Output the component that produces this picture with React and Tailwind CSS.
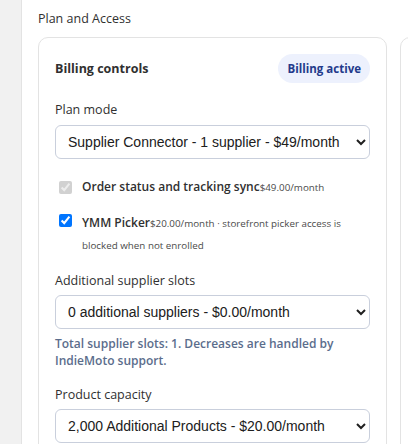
import React from 'react';

const ui = { fontFamily: '"Open Sans", "Noto Sans", sans-serif' };
const field = { fontFamily: '"Liberation Sans", Arial, sans-serif' };

function Select({ value, options }) {
  return (
    <select
      defaultValue={value}
      style={field}
      className="w-full h-[34px] rounded-[6px] border border-[#c9cfdc] bg-white pl-[8px] pr-[6px] text-[14px] text-[#202020]"
    >
      {options.map(o => <option key={o}>{o}</option>)}
    </select>
  );
}

export default function App() {
  return (
    <div style={ui} className="w-[408px] h-[444px] overflow-hidden flex bg-[#f1f1f1] text-[#303030]">
      <div className="w-[21px] shrink-0" />
      <div className="flex-1 bg-white border-l border-[#e3e3e3] pl-[16px] pt-[9px] overflow-hidden">
        <h2 className="text-[12.5px] leading-[20px] mb-[8px]">Plan and Access</h2>
        <div className="grid grid-cols-[349px_349px] gap-[13px]">
          <div className="rounded-[10px] border border-[#e3e3e3] bg-white p-4">
            <div className="flex items-center justify-between">
              <h3 className="text-[12.5px] font-bold pt-[2px]">Billing controls</h3>
              <span className="h-[29px] px-[9px] rounded-full bg-[#edf1fd] text-[#233a8b] text-[11.5px] font-bold flex items-center">Billing active</span>
            </div>

            <div className="mt-[18px] text-[12.5px] leading-[18px]">Plan mode</div>
            <div className="mt-[6px]">
              <Select value="Supplier Connector - 1 supplier - $49/month" options={['Supplier Connector - 1 supplier - $49/month', 'Full Platform - $99/month']} />
            </div>

            <label className="mt-[18px] flex items-center gap-[10px] leading-[20px]">
              <input type="checkbox" checked disabled readOnly className="w-[13px] h-[13px] ml-[4px] shrink-0" />
              <span className="text-[12px] font-semibold">Order status and tracking sync<span className="text-[9.8px] font-normal text-[#4a4a4a]">$49.00/month</span></span>
            </label>

            <label className="mt-[14px] flex items-start gap-[10px] leading-[21px]">
              <input type="checkbox" defaultChecked className="w-[13px] h-[13px] ml-[4px] mt-[2px] shrink-0" />
              <span className="text-[12px] font-semibold">YMM Picker<span className="text-[9.8px] font-normal text-[#4a4a4a]">$20.00/month · storefront picker access is blocked when not enrolled</span></span>
            </label>

            <div className="mt-[16px] text-[12.5px] leading-[18px]">Additional supplier slots</div>
            <div className="mt-[5px]">
              <Select value="0 additional suppliers - $0.00/month" options={['0 additional suppliers - $0.00/month', '1 additional supplier - $29.00/month']} />
            </div>
            <p className="mt-[6px] text-[12px] leading-[17px] font-semibold text-[#5b6d8c]">Total supplier slots: 1. Decreases are handled by IndieMoto support.</p>

            <div className="mt-[17px] text-[12.5px] leading-[18px]">Product capacity</div>
            <div className="mt-[5px]">
              <Select value="2,000 Additional Products - $20.00/month" options={['2,000 Additional Products - $20.00/month', '5,000 Additional Products - $40.00/month']} />
            </div>
          </div>
          <div className="rounded-[10px] border border-[#e3e3e3] bg-white h-[500px]" />
        </div>
      </div>
    </div>
  );
}
